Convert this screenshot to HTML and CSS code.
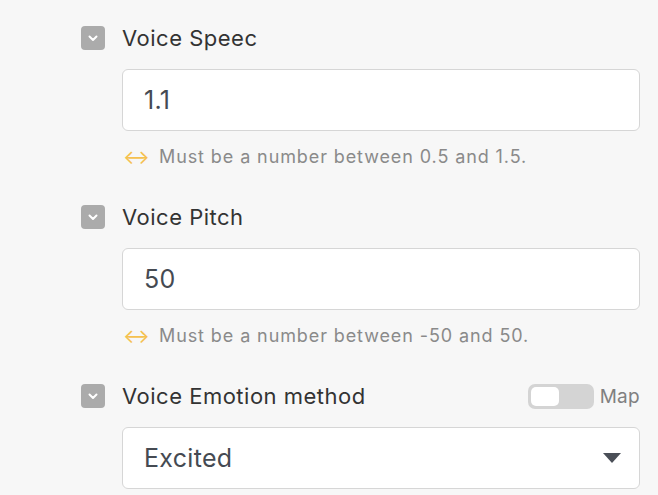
FILE: index.html
```html
<!DOCTYPE html>
<html>

<head>
    <title>Voice Settings</title>
    <link rel="stylesheet" href="styles.css">
</head>

<body>
    <div class="field">
        <div class="field-head">
            <span class="check"><svg width="14" height="14" viewBox="0 0 14 14"><path d="M3.5 5.5 L7 9 L10.5 5.5" fill="none" stroke="#fff" stroke-width="2" stroke-linecap="round" stroke-linejoin="round"/></svg></span>
            <span class="label">Voice Speec</span>
        </div>
        <div class="input-box">1.1</div>
        <div class="hint"><span class="hint-icon">&#x2194;</span>Must be a number between 0.5 and 1.5.</div>
    </div>

    <div class="field">
        <div class="field-head">
            <span class="check"><svg width="14" height="14" viewBox="0 0 14 14"><path d="M3.5 5.5 L7 9 L10.5 5.5" fill="none" stroke="#fff" stroke-width="2" stroke-linecap="round" stroke-linejoin="round"/></svg></span>
            <span class="label">Voice Pitch</span>
        </div>
        <div class="input-box">50</div>
        <div class="hint"><span class="hint-icon">&#x2194;</span>Must be a number between -50 and 50.</div>
    </div>

    <div class="field">
        <div class="field-head">
            <span class="check"><svg width="14" height="14" viewBox="0 0 14 14"><path d="M3.5 5.5 L7 9 L10.5 5.5" fill="none" stroke="#fff" stroke-width="2" stroke-linecap="round" stroke-linejoin="round"/></svg></span>
            <span class="label">Voice Emotion method</span>
            <span class="toggle"><span class="knob"></span></span>
            <span class="toggle-label">Map</span>
        </div>
        <div class="input-box select-box">
            <span>Excited</span>
            <svg width="18" height="10" viewBox="0 0 18 10"><path d="M0 0 H18 L9 10 Z" fill="#4a4f57"/></svg>
        </div>
    </div>
</body>

</html>
```

FILE: styles.css
```css
body {
    font-family: Inter, "Noto Sans", sans-serif;
    font-optical-sizing: none;
    font-weight: 380;
    background-color: #f7f7f7;
    margin: 0;
    padding: 26px 18px 0 81px;
}

.field {
    margin-bottom: 38px;
}

.field:last-child {
    margin-bottom: 0;
}

.field-head {
    display: flex;
    align-items: center;
    height: 24px;
}

.check {
    width: 24px;
    height: 24px;
    border-radius: 4px;
    background-color: #ababab;
    display: flex;
    align-items: center;
    justify-content: center;
    margin-right: 17px;
}

.label {
    font-size: 22px;
    letter-spacing: 0.5px;
    color: #333;
    flex: 1;
}

.toggle {
    width: 66px;
    height: 25px;
    border-radius: 7px;
    background-color: #d4d4d4;
    display: flex;
    align-items: center;
    padding-left: 3px;
    box-sizing: border-box;
    margin-right: 6px;
}

.knob {
    width: 28px;
    height: 19px;
    border-radius: 5px;
    background-color: #fff;
}

.toggle-label {
    font-size: 19px;
    letter-spacing: 0.3px;
    color: #808080;
}

.input-box {
    margin: 19px 0 0 41px;
    height: 60px;
    border: 1px solid #d6d6d6;
    border-radius: 6px;
    background-color: #fff;
    font-size: 25px;
    letter-spacing: 0.3px;
    color: #454a52;
    display: flex;
    align-items: center;
    padding: 0 18px 0 21px;
}

.select-box {
    justify-content: space-between;
}

.hint {
    margin: 16px 0 0 42px;
    font-size: 18px;
    letter-spacing: 0.9px;
    line-height: 20px;
    color: #8a8a8a;
    display: flex;
    align-items: center;
}

.hint-icon {
    color: #f5c150;
    font-size: 20px;
    width: 36px;
    letter-spacing: 0;
}
```
